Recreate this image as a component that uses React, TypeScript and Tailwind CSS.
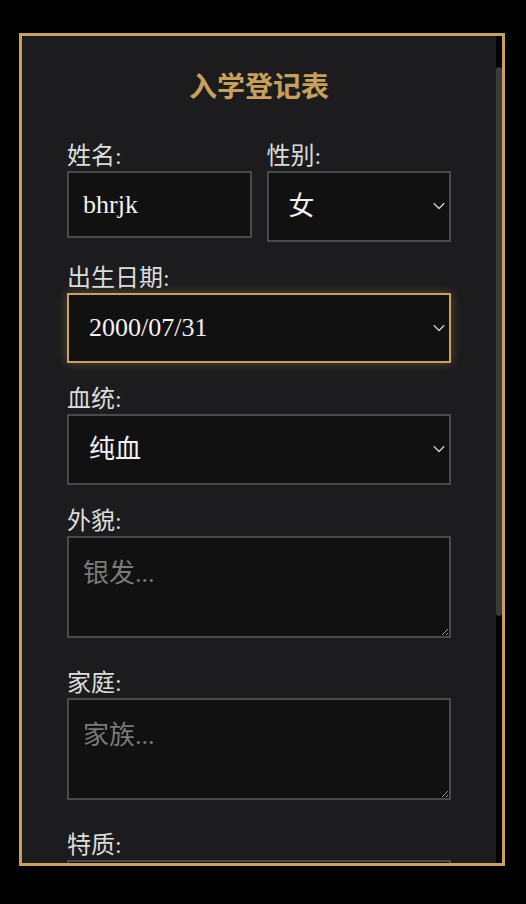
import { useLayoutEffect, useRef } from "react";

// Enrollment form panel: gold-framed dark card, scrollable, slightly scrolled down.

const fontStack = "font-['Liberation_Serif','Noto_Sans_CJK_SC',serif]";

function Chevron() {
  return (
    <svg
      width="12"
      height="7"
      viewBox="0 0 12 7"
      fill="none"
      className="pointer-events-none absolute right-[6px] top-1/2 -translate-y-1/2"
    >
      <path d="M0.8 0.8 L6 6 L11.2 0.8" stroke="#d0d0d0" strokeWidth="1.3" />
    </svg>
  );
}

function Label({ children }: { children: React.ReactNode }) {
  return <label className="block text-[24px] leading-[30px] text-[#dcdcdc]">{children}</label>;
}

function SelectBox({ value, glow = false }: { value: string; glow?: boolean }) {
  return (
    <div className="relative">
      <select
        defaultValue={value}
        className={
          glow
            ? "block h-[70.5px] w-full appearance-none border-2 border-[#c9a15a] bg-[#111111] pl-[20px] text-[26px] text-[#f2f2f2] outline-none shadow-[0_0_10px_rgba(201,161,90,0.35)]"
            : "block h-[70.5px] w-full appearance-none border-2 border-[#4a4a4a] bg-[#111111] pl-[20px] text-[26px] text-[#f2f2f2] outline-none"
        }
      >
        <option value={value}>{value}</option>
      </select>
      <Chevron />
    </div>
  );
}

function Area({ placeholder }: { placeholder?: string }) {
  return (
    <textarea
      placeholder={placeholder}
      className="block h-[102px] w-full border-2 border-[#4a4a4a] bg-[#111111] px-[14px] pt-[15px] text-[26px] leading-[1.6] text-[#f2f2f2] outline-none placeholder:text-[#7a7a7a] [color-scheme:dark]"
    />
  );
}

export default function App() {
  const scroller = useRef<HTMLDivElement>(null);

  useLayoutEffect(() => {
    if (scroller.current) scroller.current.scrollTop = 47;
  }, []);

  return (
    <main className={`min-h-screen bg-black pt-[33px] ${fontStack}`}>
      <div className="ml-[19px] flex h-[833px] w-[486px] border-[3px] border-[#c9a15a] bg-[#1c1c1e]">
        <div
          ref={scroller}
          className="min-w-0 flex-1 overflow-y-auto [scrollbar-width:none] [&::-webkit-scrollbar]:hidden"
        >
          <form className="h-[1246px] px-[45px] pt-[79px]">
            <h2 className="mb-[33px] text-center text-[28px] font-bold leading-[40px] text-[#c9a05a]">
              入学登记表
            </h2>

            <div className="mb-[21px] flex items-start gap-[15px]">
              <div className="flex-1">
                <Label>姓名:</Label>
                <input
                  defaultValue="bhrjk"
                  className="block h-[67px] w-full border-2 border-[#4a4a4a] bg-[#111111] px-[14px] text-[26px] text-[#f2f2f2] outline-none"
                />
              </div>
              <div className="flex-1">
                <Label>性别:</Label>
                <SelectBox value="女" />
              </div>
            </div>

            <div className="mb-[21px]">
              <Label>出生日期:</Label>
              <SelectBox value="2000/07/31" glow />
            </div>

            <div className="mb-[21px]">
              <Label>血统:</Label>
              <SelectBox value="纯血" />
            </div>

            <div className="mb-[30px]">
              <Label>外貌:</Label>
              <Area placeholder="银发..." />
            </div>

            <div className="mb-[30px]">
              <Label>家庭:</Label>
              <Area placeholder="家族..." />
            </div>

            <div className="mb-[30px]">
              <Label>特质:</Label>
              <Area />
            </div>
          </form>
        </div>

        {/* scrollbar track + thumb */}
        <div className="w-[6px] shrink-0 bg-black">
          <div className="mt-[31px] h-[549px] rounded-[3px] bg-[#3b3b3b]" />
        </div>
      </div>
    </main>
  );
}
